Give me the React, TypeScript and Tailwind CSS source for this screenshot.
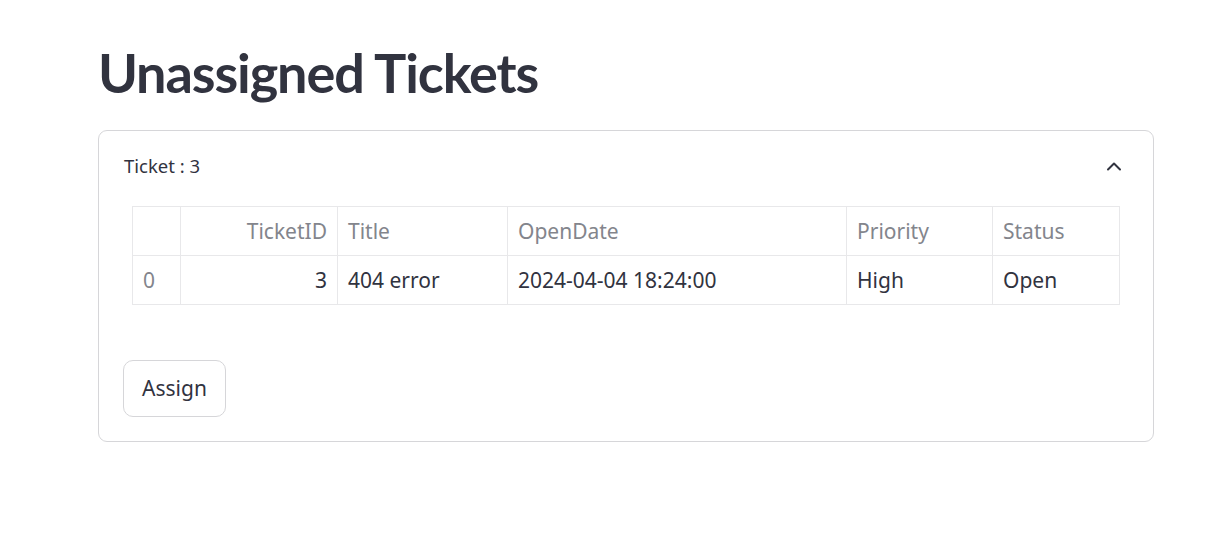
import React from "react";

const cols = [
  { name: "", w: 48, align: "left" },
  { name: "TicketID", w: 157, align: "right" },
  { name: "Title", w: 170, align: "left" },
  { name: "OpenDate", w: 339, align: "left" },
  { name: "Priority", w: 146, align: "left" },
  { name: "Status", w: 127, align: "left" },
];

const row = ["0", "3", "404 error", "2024-04-04 18:24:00", "High", "Open"];

export default function App() {
  return (
    <div
      className="min-h-[549px] w-full bg-white text-[#31333f]"
      style={{ fontFamily: '"Noto Sans", sans-serif' }}
    >
      <div className="pl-[98px] pt-[40px]">
        <h1
          className="text-[54px] leading-[66px] font-bold tracking-[-1.1px] text-[#31333f]"
          style={{ fontFamily: 'Lato, "Noto Sans", sans-serif' }}
        >
          Unassigned Tickets
        </h1>
        <div className="mt-[24px] w-[1056px] rounded-[9px] border border-[#d6d6d9]">
          <div className="flex h-[70px] items-center justify-between pl-[25px] pr-[31px]">
            <span className="text-[18.5px] text-[#31333f]">Ticket : 3</span>
            <svg width="16" height="10" viewBox="0 0 16 10" fill="none">
              <path
                d="M2 8.5 L8 2.5 L14 8.5"
                stroke="#31333f"
                strokeWidth="2"
                strokeLinecap="round"
                strokeLinejoin="round"
              />
            </svg>
          </div>
          <div className="px-[24px] pt-[5px] pb-[24px]">
            <div className="px-[9px]">
              <table className="border-collapse text-[21px]" style={{ tableLayout: "fixed", width: 987 }}>
                <colgroup>
                  {cols.map((c, i) => (
                    <col key={i} style={{ width: c.w }} />
                  ))}
                </colgroup>
                <thead>
                  <tr>
                    {cols.map((c, i) => (
                      <th
                        key={i}
                        className={`h-[49px] border border-[#e8e8ea] px-[10px] pt-[2px] font-normal text-[#83858c] align-middle ${
                          c.align === "right" ? "text-right" : "text-left"
                        }`}
                      >
                        {c.name}
                      </th>
                    ))}
                  </tr>
                </thead>
                <tbody>
                  <tr>
                    {row.map((v, i) => (
                      <td
                        key={i}
                        className={`h-[49px] border border-[#e8e8ea] px-[10px] pt-[2px] align-middle ${
                          i === 0 ? "text-[#83858c]" : "text-[#31333f]"
                        } ${cols[i].align === "right" ? "text-right" : "text-left"}`}
                      >
                        {v}
                      </td>
                    ))}
                  </tr>
                </tbody>
              </table>
            </div>
            <button className="mt-[55px] flex h-[57px] w-[103px] items-center justify-center rounded-[10px] border border-[#d6d6d9] bg-white text-[21px] text-[#31333f]">
              Assign
            </button>
          </div>
        </div>
      </div>
    </div>
  );
}
